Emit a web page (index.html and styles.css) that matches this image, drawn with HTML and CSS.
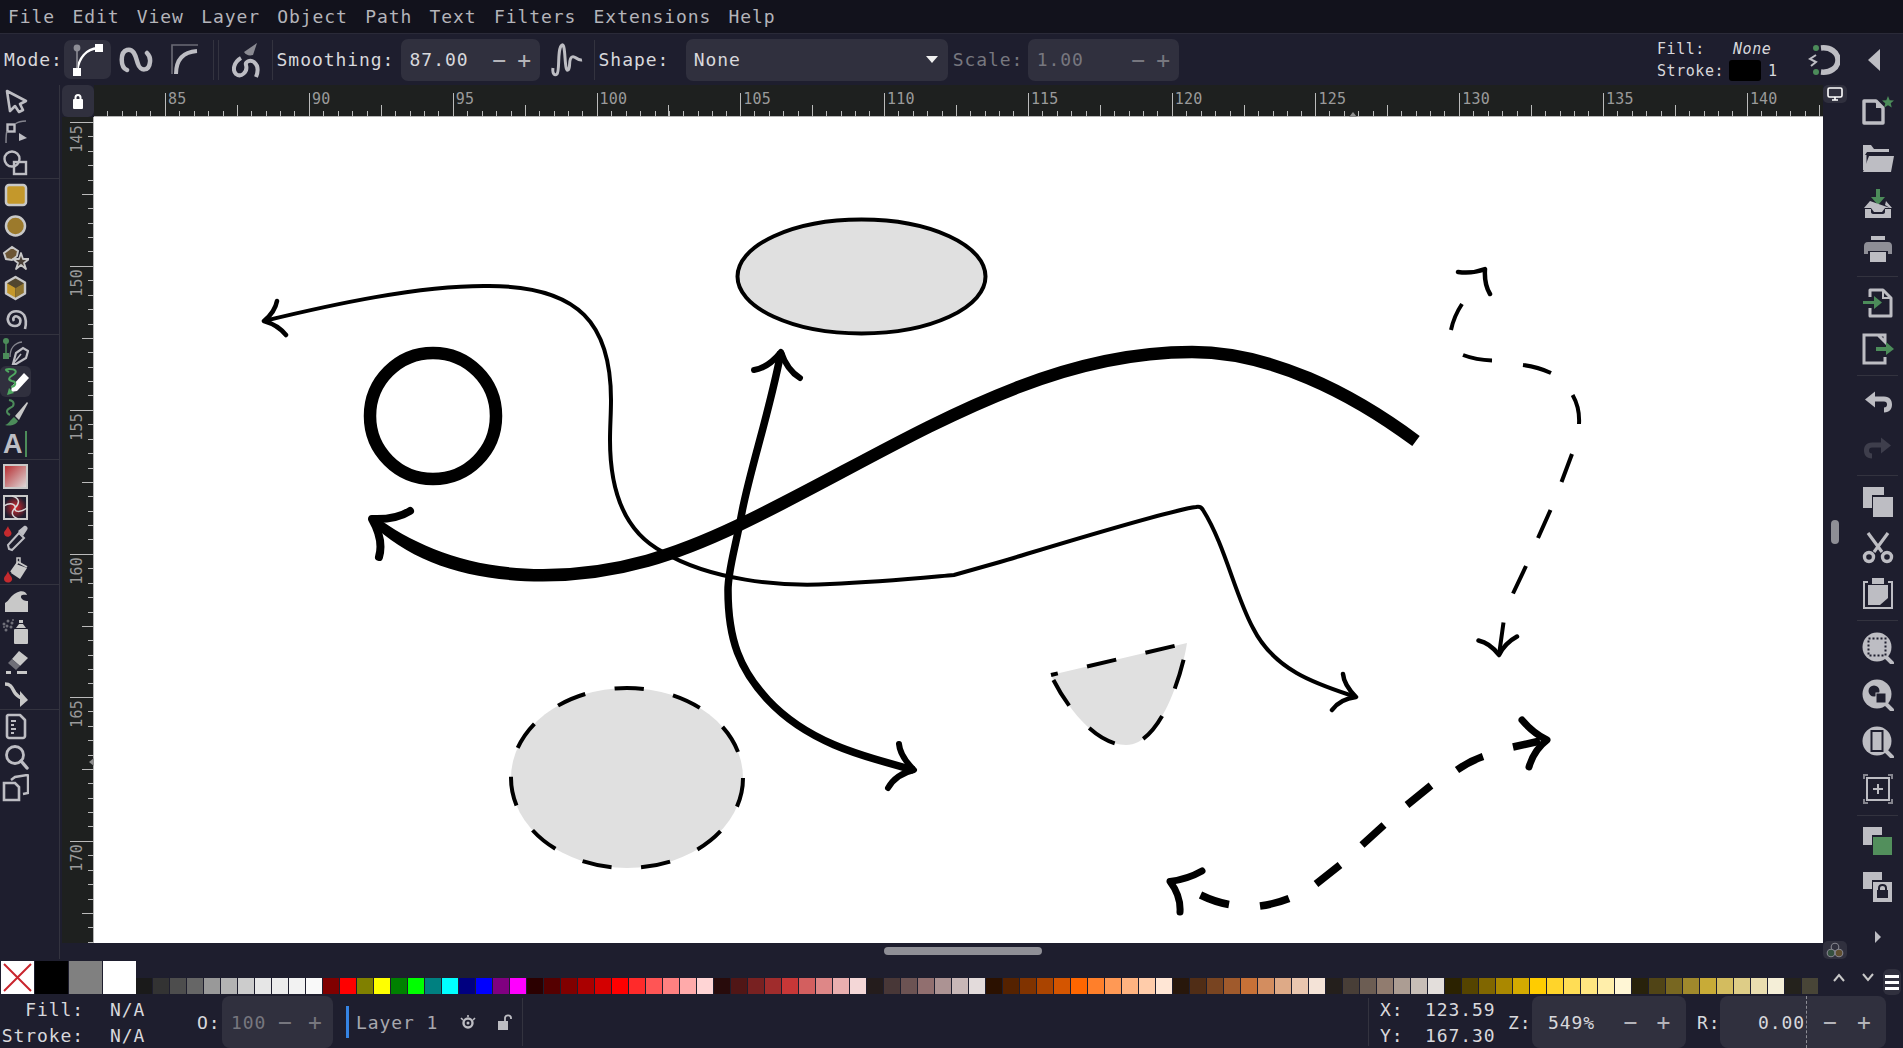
FILE: index.html
```html
<!DOCTYPE html>
<html>
<head>
	<title>Inkscape</title>
	<link rel="stylesheet" href="styles.css">
</head>

<body>
<div class="app">

	<!-- Menu -->
	<div class="menubar">
		<span>File</span><span>Edit</span><span>View</span><span>Layer</span><span>Object</span><span>Path</span><span>Text</span><span>Filters</span><span>Extensions</span><span>Help</span>
	</div>

	<!-- Pencil tool options -->
	<div class="toolbar">
		<span class="lbl mode-lbl">Mode:</span>
		<div class="modebtn active">
			<svg width="32" height="34" viewBox="0 0 32 34"><path d="M5 28C7 15 14 6 26 5" fill="none" stroke="#fff" stroke-width="2.4"/><path d="M5 6V26" stroke="#8e8e96" stroke-width="1.6"/><circle cx="5" cy="5" r="3.4" fill="#8e8e96"/><rect x="1" y="25" width="8" height="8" fill="#fff"/><rect x="23" y="1" width="8" height="8" fill="#fff"/></svg>
		</div>
		<div class="modebtn">
			<svg width="34" height="26" viewBox="0 0 34 26"><path d="M8 23C1 20 1 5 8 3C16 1 17 12 19 17C21 24 30 25 31 15C31.500 11 30 8 28 6" fill="none" stroke="#bdbdc3" stroke-width="4.500" stroke-linecap="round"/></svg>
		</div>
		<div class="modebtn">
			<svg width="28" height="32" viewBox="0 0 28 32"><path d="M1 30V1H27" fill="none" stroke="#6b6b75" stroke-width="1.600"/><path d="M5 30C5 16 12 8 26 7" fill="none" stroke="#bdbdc3" stroke-width="4"/></svg>
		</div>
		<i class="vsep s1"></i><i class="vsep s2"></i>
		<div class="inkbtn">
			<svg width="28" height="36" viewBox="0 0 28 36"><path d="M12 10L25 1L21 13C17 14 14 13 12 10Z" fill="#8a8a92"/><path d="M9 16C2 20 0 28 4 32C9 36 16 30 14 23C13 20 18 17 22 20C27 24 26 30 24 35" fill="none" stroke="#bdbdc3" stroke-width="4"/></svg>
		</div>
		<i class="vsep s3"></i>
		<span class="lbl smooth-lbl">Smoothing:</span>
		<div class="spin smooth"><span class="val">87.00</span><span class="pm">−</span><span class="pm">+</span></div>
		<div class="shapeicon">
			<svg width="32" height="36" viewBox="0 0 32 36"><path d="M2 26C1 32 4 34 6 32C9 29 6 6 11 3C15 1 13 30 17 28C20 26 17 17 21 15C24 13 26 19 31 18" fill="none" stroke="#bdbdc3" stroke-width="3"/></svg>
		</div>
		<i class="vsep s4"></i>
		<span class="lbl shape-lbl">Shape:</span>
		<div class="select"><span>None</span><i class="caret"></i></div>
		<span class="lbl dim scale-lbl">Scale:</span>
		<div class="spin scale dim"><span class="val">1.00</span><span class="pm">−</span><span class="pm">+</span></div>

		<div class="fillstroke">
			<div class="fs-row"><span class="fs-lbl">Fill:</span><em>None</em></div>
			<div class="fs-row"><span class="fs-lbl">Stroke:</span><b class="swatch-black"></b><span class="fs-w">1</span></div>
		</div>
		<div class="styleicon">
			<svg width="32" height="32" viewBox="0 0 32 32"><path d="M13 4C22 3 30 8 30 16C30 24 22 29 13 28" fill="none" stroke="#bdbdc3" stroke-width="5.500"/><circle cx="8" cy="4" r="3" fill="#4c8c5a"/><circle cx="8" cy="28" r="3" fill="#4c8c5a"/><path d="M8 11L2 15L8 18L3 22" fill="none" stroke="#bdbdc3" stroke-width="2"/></svg>
		</div>
		<i class="collapse"></i>
	</div>

	<div class="main">
		<!-- Tool column -->
		<div class="tools">
			<div class="tool"><svg width="28" height="28" viewBox="0 0 28 28"><path d="M6 4L25 14L19 17L22 23L18 25L14 19L9 24Z" fill="none" stroke="#bdbdc3" stroke-width="2.600" stroke-linejoin="round"/></svg></div>
			<div class="tool"><svg width="28" height="28" viewBox="0 0 28 28"><rect x="6.500" y="6.500" width="7" height="7" fill="none" stroke="#bdbdc3" stroke-width="2.400"/><path d="M5 25C5 19 5 15 6 13M14 6C17 4 20 3 25 3" fill="none" stroke="#85858e" stroke-width="1.500"/><path d="M18 15L26 20L18 23Z" fill="#bdbdc3"/></svg></div>
			<div class="tool"><svg width="28" height="28" viewBox="0 0 28 28"><circle cx="11" cy="10" r="7.500" fill="none" stroke="#bdbdc3" stroke-width="2.400"/><rect x="13" y="13" width="12" height="12" fill="none" stroke="#bdbdc3" stroke-width="2.400"/></svg></div>
			<i class="hsep"></i>
			<div class="tool"><svg width="28" height="28" viewBox="0 0 28 28"><rect x="5" y="4" width="20" height="20" rx="3" fill="#c4982b" stroke="#c8c8c8" stroke-width="2.500"/></svg></div>
			<div class="tool"><svg width="28" height="28" viewBox="0 0 28 28"><circle cx="14.500" cy="14" r="9.500" fill="#9c7a2c" stroke="#c8c8c8" stroke-width="2.500"/></svg></div>
			<div class="tool"><svg width="28" height="28" viewBox="0 0 28 28"><path d="M3 10L11 4L17 8L16 13L11 17L5 16Z" fill="#6b5535" stroke="#c8c8c8" stroke-width="2"/><path d="M20 10L22 16L28 16L23 20L25 26L20 22L15 26L17 20L12 16L18 16Z" fill="#4a4038" stroke="#c8c8c8" stroke-width="1.800" stroke-linejoin="round"/></svg></div>
			<div class="tool"><svg width="28" height="28" viewBox="0 0 28 28"><path d="M14.500 3L24 8.500L14.500 14L5 8.500Z" fill="#51462f"/><path d="M5 8.500L14.500 14V25L5 19.500Z" fill="#c4982b"/><path d="M24 8.500L14.500 14V25L24 19.500Z" fill="#8f7430"/><path d="M14.500 3L24 8.500V19.500L14.500 25L5 19.500V8.500Z" fill="none" stroke="#c8c8c8" stroke-width="2.400" stroke-linejoin="round"/></svg></div>
			<div class="tool"><svg width="28" height="28" viewBox="0 0 28 28"><path d="M13 16C11 13 14 10 17 12C21 14 20 21 14 21C8 21 5 15 8 10C11 5 19 5 23 10C26 15 25 20 24 24" fill="none" stroke="#bdbdc3" stroke-width="2.600"/></svg></div>
			<i class="hsep"></i>
			<div class="tool"><svg width="28" height="28" viewBox="0 0 28 28"><circle cx="5" cy="4" r="3" fill="#4c8c5a"/><path d="M5 6V18" stroke="#4c8c5a" stroke-width="1.500"/><rect x="2" y="16" width="6" height="6" fill="#4c8c5a"/><path d="M9 20C9 12 13 6 21 5" fill="none" stroke="#85858e" stroke-width="1.400"/><path d="M12 27L15 16L22 11L27 14L25 21L15 27Z" fill="none" stroke="#bdbdc3" stroke-width="2.200"/><path d="M12 27L20 17" stroke="#bdbdc3" stroke-width="1.500"/></svg></div>
			<div class="tool on"><svg width="28" height="28" viewBox="0 0 28 28"><path d="M10 18L22 5L27 10L15 23L9 24Z" fill="#fff"/><path d="M7 4C3 2 3 1 7 1C14 1 16 4 11 7C6 10 6 12 10 13C15 14 14 18 9 19" fill="none" stroke="#4fa860" stroke-width="2"/><path d="M7 20L12 25L5 27Z" fill="#4fa860"/></svg></div>
			<div class="tool"><svg width="28" height="28" viewBox="0 0 28 28"><path d="M8 1C14 2 14 7 9 9C5 11 5 14 9 16" fill="none" stroke="#4c8c5a" stroke-width="2"/><path d="M14 17L26 3L27 4L18 21Z" fill="#c8c8c8"/><path d="M13 18L17 22C14 27 8 27 4 26C8 25 9 21 13 18Z" fill="#4c8c5a"/></svg></div>
			<div class="tool text-tool"><span class="glyph-a">A</span><i class="caret-green"></i></div>
			<i class="hsep"></i>
			<div class="tool"><svg width="28" height="28" viewBox="0 0 28 28"><defs><linearGradient id="gr" x1="0" y1="0" x2="1" y2="1"><stop offset="0" stop-color="#b5262a"/><stop offset="1" stop-color="#e0e0e0"/></linearGradient></defs><rect x="3" y="3" width="23" height="23" fill="url(#gr)" stroke="#c8c8c8" stroke-width="2"/></svg></div>
			<div class="tool"><svg width="28" height="28" viewBox="0 0 28 28"><defs><radialGradient id="ms"><stop offset="0" stop-color="#e0282c"/><stop offset="1" stop-color="#1e1e2e"/></radialGradient></defs><rect x="3" y="3" width="23" height="23" fill="url(#ms)" stroke="#c8c8c8" stroke-width="2"/><path d="M3 13C9 9 15 11 14 15C13 19 19 20 26 15M11 3C19 5 19 10 14 15C10 19 10 23 17 26" fill="none" stroke="#d8d8d8" stroke-width="1.500"/></svg></div>
			<div class="tool"><svg width="28" height="28" viewBox="0 0 28 28"><path d="M7 2C8 6 12 8 10 11C8 14 3 13 3 9C3 7 6 5 7 2Z" fill="#c52a2e"/><path d="M8 25L7 21L18 9L23 14L11 26Z" fill="none" stroke="#bdbdc3" stroke-width="2"/><path d="M17 7L23 2C25 1 28 4 26 6L22 12Z" fill="#bdbdc3"/></svg></div>
			<div class="tool"><svg width="28" height="28" viewBox="0 0 28 28"><path d="M15 9L26 13L19 24L10 18Z" fill="#c8c8c8"/><path d="M10 17L17 7L26 12" fill="none" stroke="#c8c8c8" stroke-width="2"/><path d="M16 9V3H19V8" fill="none" stroke="#c8c8c8" stroke-width="1.500"/><path d="M7 16C8 20 12 22 11 25C9 29 3 28 3 24C3 21 6 20 7 16Z" fill="#c52a2e"/></svg></div>
			<i class="hsep"></i>
			<div class="tool"><svg width="28" height="28" viewBox="0 0 28 28"><path d="M4 25V16C8 14 10 8 15 6C20 3 25 4 26 8C22 7 18 8 21 12C23 14 26 14 27 14V25Z" fill="#c8c8c8"/></svg></div>
			<div class="tool"><svg width="28" height="28" viewBox="0 0 28 28"><rect x="13" y="11" width="14" height="15" rx="1" fill="#c8c8c8"/><path d="M15 10L18 6H22L25 10Z" fill="#c8c8c8"/><rect x="18" y="2" width="4" height="3" fill="#c8c8c8"/><g fill="#6f6f78"><circle cx="3" cy="6" r="1.500"/><circle cx="7" cy="3" r="1.500"/><circle cx="11" cy="5" r="1.500"/><circle cx="6" cy="8" r="1.500"/><circle cx="10" cy="9" r="1.500"/><circle cx="5" cy="12" r="1.500"/><circle cx="3" cy="9" r="1"/><circle cx="12" cy="2" r="1"/></g></svg></div>
			<div class="tool"><svg width="28" height="28" viewBox="0 0 28 28"><path d="M18 2L27 9L19 17L11 10Z" fill="#c8c8c8"/><path d="M11 10L19 17L15 21L7 14Z" fill="#6f6f78"/><rect x="16" y="22" width="10" height="3" fill="#c8c8c8"/><rect x="5" y="22" width="5" height="3" fill="#c8c8c8"/></svg></div>
			<div class="tool"><svg width="28" height="28" viewBox="0 0 28 28"><path d="M4 4C10 4 11 8 14 13C16 16 18 17 21 18" fill="none" stroke="#c8c8c8" stroke-width="3.400"/><path d="M19 11L27 20L19 27Z" fill="#c8c8c8"/></svg></div>
			<i class="hsep"></i>
			<div class="tool"><svg width="28" height="28" viewBox="0 0 28 28"><path d="M7 3H19L24 8V24C24 25 23 26 22 26H8C7 26 6 25 6 24V4Z" fill="none" stroke="#bdbdc3" stroke-width="2.600" stroke-linejoin="round"/><path d="M10 9H15M10 13H13M10 17H15M10 21H13" stroke="#bdbdc3" stroke-width="1.800"/></svg></div>
			<div class="tool"><svg width="28" height="28" viewBox="0 0 28 28"><circle cx="14" cy="12" r="8.500" fill="none" stroke="#bdbdc3" stroke-width="2.800"/><path d="M20 18L26 25" stroke="#bdbdc3" stroke-width="3.400" stroke-linecap="round"/></svg></div>
			<div class="tool"><svg width="28" height="28" viewBox="0 0 28 28"><path d="M3 9H14L18 13V26H3Z" fill="none" stroke="#bdbdc3" stroke-width="2.600"/><path d="M10 6L14 3L26 1C27 1 27 2 27 2V19L22 20" fill="none" stroke="#bdbdc3" stroke-width="2.400"/></svg></div>
		</div>

		<!-- Rulers and canvas -->
		<div class="workspace">
			<div class="ruler-row">
				<div class="corner">
					<svg width="12" height="16" viewBox="0 0 12 16"><rect x="1" y="6" width="10" height="10" rx="1" fill="#fff"/><path d="M3.500 7V4.500C3.500 1 8.500 1 8.500 4.500V7" fill="none" stroke="#fff" stroke-width="2"/></svg>
				</div>
				<div class="hruler">
					<div class="cell first"></div>
					<div class="cell">85</div><div class="cell">90</div><div class="cell">95</div><div class="cell">100</div><div class="cell">105</div><div class="cell">110</div><div class="cell">115</div><div class="cell">120</div><div class="cell">125</div><div class="cell">130</div><div class="cell">135</div><div class="cell">140</div>
					<i class="marker-h"></i>
				</div>
			</div>
			<div class="canvas-row">
				<div class="vruler">
					<div class="vcell first"><span>145</span></div>
					<div class="vcell"><span>150</span></div>
					<div class="vcell"><span>155</span></div>
					<div class="vcell"><span>160</span></div>
					<div class="vcell"><span>165</span></div>
					<div class="vcell"><span>170</span></div>
					<i class="marker-v"></i>
				</div>
				<div class="canvas">
					<svg class="drawing" width="1729" height="826" viewBox="94 117 1729 826">
						<!-- top ellipse -->
						<ellipse cx="861.500" cy="276.500" rx="124" ry="57" fill="#e0e0e0" stroke="#000" stroke-width="4"/>
						<!-- ring -->
						<circle cx="433" cy="416" r="63" fill="none" stroke="#000" stroke-width="12.500"/>
						<!-- dashed ellipse -->
						<ellipse cx="627" cy="778" rx="116" ry="90" fill="#e0e0e0" stroke="#000" stroke-width="4" stroke-dasharray="29.500 29.770"/>
						<!-- dashed wedge -->
						<path d="M1051 675L1187 643C1182 675 1160 745 1126 745C1095 745 1065 705 1051 675Z" fill="#e0e0e0" stroke="#000" stroke-width="4" stroke-dasharray="30 30" stroke-dashoffset="-37"/>

						<!-- thin long arrow -->
						<path d="M264 321C330 305 420 285 489 286C580 286 611 325 611 400C611 415 610 425 610 440C610 500 630 535 663 552C710 580 780 587 830 584C880 582 920 578 954 575L1000 562C1060 544 1170 510 1196 507Q1201 506 1203 510C1225 545 1235 595 1253 628C1275 672 1320 685 1356 697" fill="none" stroke="#000" stroke-width="4"/>
						<path d="M277 301Q275 312 264 321Q278 325 286 335M1343 674Q1344 685 1356 697Q1340 699 1332 710" fill="none" stroke="#000" stroke-width="4.500" stroke-linecap="round" stroke-linejoin="round"/>

						<!-- heavy sweep, thinning towards the head -->
						<path d="M375 516C415 546 470 569 543 569L543 581.500C470 581.500 410 562 371 523Z" fill="#000"/>
						<path d="M543 575.200C620 575 680 553 737 526C830 482 920 425 1016 388C1080 363 1140 352 1192 352C1270 352 1350 392 1416 441" fill="none" stroke="#000" stroke-width="12.500"/>
						<path d="M410 511Q396 520 372 519Q384 540 379 557" fill="none" stroke="#000" stroke-width="8" stroke-linecap="round" stroke-linejoin="round"/>

						<!-- medium double arrow -->
						<path d="M781 352C770 410 750 470 742 512C735 550 728 570 728 590C728 640 740 670 768 700C810 745 870 758 914 770" fill="none" stroke="#000" stroke-width="7.500"/>
						<path d="M754 370Q768 368 781 352Q787 370 800 378M899 744Q900 756 914 770Q896 774 888 788" fill="none" stroke="#000" stroke-width="6" stroke-linecap="round" stroke-linejoin="round"/>

						<!-- thin dashed arrow -->
						<path d="M1462 304Q1454 316 1451 330M1463 355Q1476 360 1492 360.500M1523 365Q1538 367 1551 373M1572.600 395Q1580 408 1579 424M1572 454L1561.500 482M1550.500 510L1538 538M1526 566L1513 593.500M1503.500 622.500L1499 655" fill="none" stroke="#000" stroke-width="4"/>
						<path d="M1458 272Q1472 274 1485 269Q1484 284 1490 294M1478.500 640.500Q1490 643 1499 655Q1505 643 1517 636.500" fill="none" stroke="#000" stroke-width="4.500" stroke-linecap="round" stroke-linejoin="round"/>

						<!-- thick dashed arrow -->
						<path d="M1513 747L1540 741M1483 756.500Q1470 761 1457 770M1431 785.500L1407 805M1384 825L1362 845M1340 865L1316 884M1289 898.500Q1275 904 1260 906M1229 904.500Q1215 902 1200.500 895" fill="none" stroke="#000" stroke-width="7.500"/>
						<path d="M1522 720Q1533 733 1547 740Q1534 750 1529 767M1202 871Q1188 879 1170 881.500Q1181 896 1180 912" fill="none" stroke="#000" stroke-width="7" stroke-linecap="round" stroke-linejoin="round"/>
					</svg>
				</div>
			</div>
			<div class="hscroll"><i class="hthumb"></i></div>
		</div>

		<!-- Right command bar -->
		<div class="side">
			<div class="side-narrow">
				<div class="mini-btn"><svg width="16" height="14" viewBox="0 0 16 14"><rect x="1" y="1" width="14" height="9" rx="1.500" fill="none" stroke="#fff" stroke-width="1.600"/><path d="M5 13H11M8 10V13" stroke="#fff" stroke-width="1.600"/></svg></div>
				<i class="vthumb"></i>
				<div class="mini-btn"><svg width="18" height="16" viewBox="0 0 18 16"><circle cx="9" cy="5" r="3.800" fill="none" stroke="#85858e" stroke-width="1.100"/><circle cx="5" cy="11" r="3.800" fill="#35503f" stroke="#85858e" stroke-width="1.100"/><circle cx="13" cy="11" r="3.800" fill="#5f4e30" stroke="#85858e" stroke-width="1.100"/></svg></div>
			</div>
			<div class="side-tools">
				<div class="cmd"><svg width="32" height="32" viewBox="0 0 32 32"><path d="M2 5H14L21 12V27H2Z" fill="none" stroke="#bdbdc3" stroke-width="3.400" stroke-linejoin="round"/><path d="M14 5L21 12H14Z" fill="#bdbdc3"/><path d="M26 0L27.700 4.200L32 4.500L28.700 7.300L29.800 11.500L26 9.200L22.200 11.500L23.300 7.300L20 4.500L24.300 4.200Z" fill="#4c8c5a"/></svg></div>
				<div class="cmd"><svg width="32" height="32" viewBox="0 0 32 32"><path d="M1 3H9L12 7H27V10H5L3 13V28H1Z" fill="#bdbdc3"/><path d="M7 14H32L29 30H1Z" fill="#bdbdc3"/><path d="M3 13V28" stroke="#bdbdc3" stroke-width="3"/></svg></div>
				<div class="cmd"><svg width="32" height="32" viewBox="0 0 32 32"><path d="M16 1V10" stroke="#4c8c5a" stroke-width="4"/><path d="M9 9H23L16 17Z" fill="#4c8c5a"/><path d="M8 13L2 20H9L12 24H20L23 20H30L24 13L23 17L28 20M3 21H9V24C9 25 10 26 11 26H21C22 26 23 25 23 24V21H29V30H3Z" fill="#bdbdc3"/></svg></div>
				<div class="cmd"><svg width="32" height="32" viewBox="0 0 32 32"><rect x="9" y="3" width="14" height="4" fill="#bdbdc3"/><path d="M6 9H26C29 9 30 11 30 13V21H26V18H6V21H2V13C2 11 3 9 6 9Z" fill="#8e8e96"/><rect x="8" y="19" width="16" height="10" fill="#bdbdc3"/></svg></div>
				<i class="cmd-sep"></i>
				<div class="cmd"><svg width="32" height="32" viewBox="0 0 32 32"><path d="M8 10V3H21L29 11V29H8V21" fill="none" stroke="#bdbdc3" stroke-width="3" stroke-linejoin="round"/><path d="M21 3V11H29" fill="none" stroke="#bdbdc3" stroke-width="2"/><path d="M1 14H12V9L20 15.500L12 22V17H1Z" fill="#4c8c5a"/></svg></div>
				<div class="cmd"><svg width="32" height="32" viewBox="0 0 32 32"><path d="M23 9V2H16L23 9ZM16 2H2V30H23V24" fill="none" stroke="#bdbdc3" stroke-width="3"/><path d="M14 14H24V9L32 16L24 22V18H14Z" fill="#4c8c5a"/></svg></div>
				<i class="cmd-sep"></i>
				<div class="cmd"><svg width="32" height="32" viewBox="0 0 32 32"><path transform="translate(0 2.500)" d="M3 11L13 3V8H22C28 8 30 12 30 16C30 20 28 24 22 24V19C24 19 25 18 25 16C25 14 24 13 22 13H13V19Z" fill="#bdbdc3"/></svg></div>
				<div class="cmd"><svg width="32" height="32" viewBox="0 0 32 32"><path transform="translate(0 2.500)" d="M29 11L19 3V8H10C4 8 2 12 2 16C2 20 4 24 10 24V19C8 19 7 18 7 16C7 14 8 13 10 13H19V19Z" fill="#3e3e4c"/></svg></div>
				<i class="cmd-sep"></i>
				<div class="cmd"><svg width="32" height="32" viewBox="0 0 32 32"><path d="M1 1H22V9H10V22H1Z" fill="#bdbdc3"/><rect x="11" y="11" width="20" height="20" fill="#bdbdc3"/></svg></div>
				<div class="cmd"><svg width="32" height="32" viewBox="0 0 32 32"><path d="M26 1L12 20M6 1L20 20" stroke="#bdbdc3" stroke-width="3.200"/><circle cx="7" cy="25" r="4.500" fill="none" stroke="#bdbdc3" stroke-width="3.400"/><circle cx="25" cy="25" r="4.500" fill="none" stroke="#bdbdc3" stroke-width="3.400"/></svg></div>
				<div class="cmd"><svg width="32" height="32" viewBox="0 0 32 32"><path d="M6 5H2V31H30V5H26" fill="none" stroke="#bdbdc3" stroke-width="2"/><rect x="10" y="1" width="12" height="6" fill="#bdbdc3"/><path d="M6 8H26V21L18 28H6Z" fill="#bdbdc3"/></svg></div>
				<i class="cmd-sep"></i>
				<div class="zoom-group">
					<div class="cmd"><svg width="32" height="32" viewBox="0 0 32 32"><circle cx="15" cy="15" r="14.500" fill="#bdbdc3"/><path d="M24 25L30 31" stroke="#bdbdc3" stroke-width="4" stroke-linecap="round"/><rect x="6.500" y="6.500" width="17" height="17" fill="none" stroke="#1e1e2e" stroke-width="2" stroke-dasharray="2 2"/></svg></div>
					<div class="cmd"><svg width="32" height="32" viewBox="0 0 32 32"><circle cx="15" cy="15" r="14.500" fill="#bdbdc3"/><path d="M24 25L30 31" stroke="#bdbdc3" stroke-width="4" stroke-linecap="round"/><circle cx="12" cy="12" r="5.500" fill="#1e1e2e"/><rect x="14" y="14" width="10" height="10" fill="#1e1e2e" stroke="#bdbdc3" stroke-width="1"/></svg></div>
					<div class="cmd"><svg width="32" height="32" viewBox="0 0 32 32"><circle cx="15" cy="15" r="14.500" fill="#bdbdc3"/><path d="M24 25L30 31" stroke="#bdbdc3" stroke-width="4" stroke-linecap="round"/><rect x="9.500" y="5" width="11" height="20" fill="none" stroke="#1e1e2e" stroke-width="2"/></svg></div>
					<div class="cmd"><svg width="32" height="32" viewBox="0 0 32 32"><path d="M2 6V2H6M26 2H30V6M30 26V30H26M6 30H2V26" fill="none" stroke="#85858e" stroke-width="2"/><rect x="5" y="5" width="22" height="22" fill="none" stroke="#bdbdc3" stroke-width="2"/><path d="M16 11V21M11 16H21" stroke="#bdbdc3" stroke-width="2"/></svg></div>
				</div>
				<i class="cmd-sep last"></i>
				<div class="cmd"><svg width="32" height="32" viewBox="0 0 32 32"><path d="M1 2H20V10H10V20H1Z" fill="#bdbdc3"/><rect x="11" y="12" width="19" height="18" fill="#528f5c"/></svg></div>
				<div class="cmd"><svg width="32" height="32" viewBox="0 0 32 32"><path d="M1 1H20V9H10V18H1Z" fill="#bdbdc3"/><rect x="11" y="11" width="19" height="20" fill="#bdbdc3"/><rect x="15" y="19" width="11" height="8" fill="#1e1e2e"/><path d="M17 19V17C17 13 24 13 24 17V19" fill="none" stroke="#1e1e2e" stroke-width="2"/></svg></div>
				<i class="more"></i>
			</div>
		</div>
	</div>

	<!-- Palette -->
	<div class="palette">
		<span class="big none"><svg width="33" height="33" viewBox="0 0 33 33"><path d="M3 3L30 30M30 3L3 30" stroke="#c9252d" stroke-width="2"/></svg></span>
		<span class="big" style="background:#000"></span><span class="big" style="background:#808080"></span><span class="big big-last" style="background:#fff"></span>
		<div class="swatches">
			<span style="background:#1a1a1a"></span><span style="background:#333"></span><span style="background:#4d4d4d"></span><span style="background:#666"></span><span style="background:#999"></span><span style="background:#b3b3b3"></span><span style="background:#ccc"></span><span style="background:#e6e6e6"></span><span style="background:#ececec"></span><span style="background:#f2f2f2"></span><span style="background:#f9f9f9"></span>
			<span style="background:#800000"></span><span style="background:#f00"></span><span style="background:#808000"></span><span style="background:#ff0"></span><span style="background:#008000"></span><span style="background:#0f0"></span><span style="background:#008080"></span><span style="background:#0ff"></span><span style="background:#000080"></span><span style="background:#00f"></span><span style="background:#800080"></span><span style="background:#f0f"></span>
			<span style="background:#2b0000"></span><span style="background:#500"></span><span style="background:#800000"></span><span style="background:#a00"></span><span style="background:#d40000"></span><span style="background:#f00"></span><span style="background:#ff2a2a"></span><span style="background:#f55"></span><span style="background:#ff8080"></span><span style="background:#faa"></span><span style="background:#ffd5d5"></span>
			<span style="background:#280b0b"></span><span style="background:#501616"></span><span style="background:#782121"></span><span style="background:#a02c2c"></span><span style="background:#c83737"></span><span style="background:#d35f5f"></span><span style="background:#de8787"></span><span style="background:#e9afaf"></span><span style="background:#f4d7d7"></span>
			<span style="background:#241c1c"></span><span style="background:#483737"></span><span style="background:#6c5353"></span><span style="background:#916f6f"></span><span style="background:#ac9393"></span><span style="background:#c8b7b7"></span><span style="background:#e3dbdb"></span>
			<span style="background:#2b1100"></span><span style="background:#520"></span><span style="background:#803300"></span><span style="background:#a40"></span><span style="background:#d45500"></span><span style="background:#f60"></span><span style="background:#ff7f2a"></span><span style="background:#f95"></span><span style="background:#ffb380"></span><span style="background:#fca"></span><span style="background:#ffe6d5"></span>
			<span style="background:#28170b"></span><span style="background:#502d16"></span><span style="background:#784421"></span><span style="background:#a05a2c"></span><span style="background:#c87137"></span><span style="background:#d38d5f"></span><span style="background:#deaa87"></span><span style="background:#e9c6af"></span><span style="background:#f4e3d7"></span>
			<span style="background:#241f1c"></span><span style="background:#483e37"></span><span style="background:#6c5d53"></span><span style="background:#917c6f"></span><span style="background:#ac9d93"></span><span style="background:#c8beb7"></span><span style="background:#e3dedb"></span>
			<span style="background:#2b2200"></span><span style="background:#540"></span><span style="background:#806600"></span><span style="background:#a80"></span><span style="background:#d4aa00"></span><span style="background:#fc0"></span><span style="background:#ffd42a"></span><span style="background:#fd5"></span><span style="background:#ffe680"></span><span style="background:#fea"></span><span style="background:#fff6d5"></span>
			<span style="background:#28220b"></span><span style="background:#504416"></span><span style="background:#786721"></span><span style="background:#a0892c"></span><span style="background:#c8ab37"></span><span style="background:#d3bc5f"></span><span style="background:#decd87"></span><span style="background:#e9ddaf"></span><span style="background:#f4eed7"></span>
			<span style="background:#24221c"></span><span style="background:#484537"></span>
		</div>
		<div class="pal-btns">
			<svg width="12" height="9" viewBox="0 0 12 9"><path d="M1 8L6 2L11 8" fill="none" stroke="#c8c8c8" stroke-width="2"/></svg>
			<svg width="12" height="9" viewBox="0 0 12 9"><path d="M1 1L6 7L11 1" fill="none" stroke="#c8c8c8" stroke-width="2"/></svg>
			<div class="burger"><i></i><i></i><i></i></div>
		</div>
	</div>

	<!-- Status -->
	<div class="status">
		<div class="sel-style">
			<div class="st-row"><span class="st-lbl">Fill:</span><span>N/A</span></div>
			<div class="st-row"><span class="st-lbl">Stroke:</span><span>N/A</span></div>
		</div>
		<span class="lbl o-lbl">O:</span>
		<div class="spin full opacity dim"><span class="val">100</span><span class="pm">−</span><span class="pm">+</span></div>
		<i class="layer-bar"></i>
		<span class="layer-name">Layer 1</span>
		<svg class="eye" width="16" height="14" viewBox="0 0 16 14"><circle cx="8" cy="8" r="4.500" fill="none" stroke="#bdbdc3" stroke-width="2.400"/><circle cx="8" cy="8" r="1.500" fill="#bdbdc3"/><path d="M1 3L3 5M15 3L13 5M8 0V2" stroke="#bdbdc3" stroke-width="1.600"/></svg>
		<svg class="padlock" width="14" height="16" viewBox="0 0 14 16"><rect x="0" y="7" width="10" height="9" fill="#bdbdc3"/><path d="M7 7V4C7 0.500 13 0.500 13 4V5" fill="none" stroke="#bdbdc3" stroke-width="1.800"/></svg>
		<i class="st-sep first"></i>
		<i class="st-sep second"></i>
		<div class="coords">
			<div class="st-row"><span class="c-lbl">X:</span><span class="c-val">123.59</span></div>
			<div class="st-row"><span class="c-lbl">Y:</span><span class="c-val">167.30</span></div>
		</div>
		<span class="lbl z-lbl">Z:</span>
		<div class="spin full zoomspin"><span class="val">549%</span><span class="pm">−</span><span class="pm">+</span></div>
		<span class="lbl r-lbl">R:</span>
		<div class="spin full rot"><span class="val">0.00</span><span class="pm">−</span><span class="pm">+</span></div>
	</div>
</div>
</body>

</html>
```

FILE: styles.css
```css
html,
body {
	margin: 0;
	height: 100%;
	overflow: hidden;
	background: #1e1e2e;
}

.app {
	width: 1903px;
	height: 1048px;
	display: flex;
	flex-direction: column;
	font-family: "DejaVu Sans Mono", "Liberation Mono", monospace;
	font-size: 18px;
	letter-spacing: 0.93px;
	color: #d8d8dc;
}

i {
	display: block;
	flex: none;
}

svg {
	display: block;
	flex: none;
}

/* menu */
.menubar {
	height: 33px;
	flex: none;
	display: flex;
	align-items: center;
	gap: 17.3px;
	padding-left: 8px;
	background: #12121c;
	border-bottom: 1px solid #2a2a38;
	color: #b4b4ba;
}

/* tool options */
.toolbar {
	height: 51px;
	flex: none;
	display: flex;
	align-items: center;
	padding-left: 4px;
	position: relative;
}

.lbl {
	flex: none;
	white-space: nowrap;
}

.dim {
	color: #77777f;
}

.mode-lbl {
	width: 60px;
}

.modebtn {
	width: 48px;
	height: 39px;
	display: flex;
	align-items: center;
	justify-content: center;
	border-radius: 7px;
	flex: none;
}

.modebtn.active {
	background: #30303e;
	width: 47px;
}

.modebtn + .modebtn {
	width: 49px;
}

.vsep {
	width: 1px;
	height: 40px;
	background: #33333f;
}

.s1 {
	margin-left: 4px;
}

.s2 {
	margin-left: 4px;
}

.inkbtn {
	width: 53px;
	display: flex;
	justify-content: center;
	flex: none;
}

.smooth-lbl {
	margin-left: 3.6px;
	width: 124px;
}

.spin {
	display: flex;
	align-items: center;
	flex: none;
	height: 42px;
	background: #30303e;
	border-radius: 7px;
	padding-left: 9px;
	box-sizing: border-box;
}

.spin .val {
	flex: 1;
}

.spin .pm {
	width: 25px;
	text-align: center;
	font-size: 23px;
	letter-spacing: 0;
	color: #b4b4ba;
}

.spin.dim .pm {
	color: #77777f;
}

.smooth {
	width: 139px;
	padding-right: 3px;
}

.shapeicon {
	width: 54px;
	display: flex;
	justify-content: center;
	flex: none;
}

.shape-lbl {
	margin-left: 2px;
	width: 89.2px;
	padding-left: 2px;
	box-sizing: border-box;
}

.select {
	width: 262px;
	height: 42px;
	flex: none;
	display: flex;
	align-items: center;
	justify-content: space-between;
	padding: 0 10px 0 8px;
	box-sizing: border-box;
	background: #30303e;
	border-radius: 7px;
}

.caret {
	width: 0;
	height: 0;
	border-left: 6px solid transparent;
	border-right: 6px solid transparent;
	border-top: 7px solid #f0f0f0;
}

.scale-lbl {
	margin-left: 5px;
	width: 75px;
}

.scale {
	width: 151px;
	padding-right: 3px;
}

.fillstroke {
	margin-left: auto;
	width: 151px;
	font-size: 15px;
	letter-spacing: 0.55px;
	flex: none;
}

.fs-row {
	height: 22px;
	display: flex;
	align-items: center;
}

.fs-lbl {
	width: 72px;
	flex: none;
}

.fs-row em {
	margin-left: 4px;
}

.swatch-black {
	width: 32px;
	height: 21px;
	background: #000;
	border-radius: 3px;
	flex: none;
}

.fs-w {
	margin-left: 7px;
}

.styleicon {
	flex: none;
	margin-right: 28px;
}

.collapse {
	width: 0;
	height: 0;
	border-top: 11px solid transparent;
	border-bottom: 11px solid transparent;
	border-right: 12px solid #bdbdc3;
	margin-right: 23px;
}

/* main area */
.main {
	height: 876px;
	flex: none;
	display: flex;
}

.tools {
	width: 59px;
	flex: none;
	border-right: 1px solid #33333f;
	margin-right: 2px;
	height: 874px;
}

.tool {
	height: 31px;
	width: 30px;
	display: flex;
	align-items: center;
	justify-content: center;
}

.tool.on {
	width: 31px;
	background: #30303e;
	border-radius: 6px;
}

.hsep {
	height: 1px;
	background: #33333f;
}

.text-tool {
	justify-content: flex-start;
	align-items: center;
	padding-left: 3px;
	box-sizing: border-box;
	gap: 2px;
}

.glyph-a {
	font-family: "Liberation Sans", sans-serif;
	font-weight: 700;
	font-size: 27px;
	letter-spacing: 0;
	color: #bdbdc3;
	line-height: 28px;
}

.caret-green {
	width: 2.5px;
	height: 26px;
	background: #4c8c5a;
}

/* rulers */
.workspace {
	width: 1761px;
	flex: none;
	display: flex;
	flex-direction: column;
}

.ruler-row {
	height: 32px;
	flex: none;
	display: flex;
}

.corner {
	width: 32px;
	flex: none;
	background: #30303e;
	border-radius: 6px;
	display: flex;
	align-items: center;
	justify-content: center;
}

.hruler {
	flex: 1;
	display: flex;
	overflow: hidden;
	position: relative;
	background: #1e201f;
	box-shadow: inset 0 -1px 0 #b4b4b4;
}

.cell {
	width: 143.8px;
	flex: none;
	box-sizing: border-box;
	padding: 6px 0 0 3px;
	font-size: 15px;
	letter-spacing: 0.2px;
	line-height: 16px;
	color: #9a9a9a;
	background-image:
		linear-gradient(#bbb, #bbb),
		linear-gradient(#bbb, #bbb),
		repeating-linear-gradient(90deg, #bbb 0 1px, transparent 1px 14.38px);
	background-size: 1px 24px, 1px 12px, 100% 6px;
	background-position: 0 100%, 71.9px 100%, 0 100%;
	background-repeat: no-repeat;
}

.cell.first {
	margin-left: -72.700px;
}

.marker-h {
	position: absolute;
	left: 1255px;
	bottom: 0;
	width: 0;
	height: 0;
	border-left: 4px solid transparent;
	border-right: 4px solid transparent;
	border-bottom: 5px solid #8e8e8e;
}

.canvas-row {
	height: 826px;
	flex: none;
	display: flex;
}

.vruler {
	width: 32px;
	flex: none;
	box-sizing: border-box;
	overflow: hidden;
	position: relative;
	background: #1e201f;
	box-shadow: inset -1px 0 0 #b4b4b4;
	font-size: 15px;
	letter-spacing: 0.2px;
	color: #9a9a9a;
}

.vcell {
	height: 143.8px;
	box-sizing: border-box;
	padding: 3px 0 0 7px;
	background-image:
		linear-gradient(#bbb, #bbb),
		linear-gradient(#bbb, #bbb),
		repeating-linear-gradient(180deg, #bbb 0 1px, transparent 1px 14.38px);
	background-size: 24px 1px, 12px 1px, 6px 100%;
	background-position: 100% 0, 100% 71.9px, 100% 0;
	background-repeat: no-repeat;
}

.vcell.first {
	margin-top: 5.3px;
}

.vcell span {
	display: block;
	writing-mode: vertical-rl;
	transform: rotate(180deg);
	line-height: 16px;
	width: 16px;
}

.marker-v {
	position: absolute;
	right: 0;
	top: 641px;
	width: 0;
	height: 0;
	border-top: 4px solid transparent;
	border-bottom: 4px solid transparent;
	border-right: 5px solid #8e8e8e;
}

.canvas {
	flex: 1;
	background: #fff;
	overflow: hidden;
}

.drawing {
	display: block;
}

.hscroll {
	height: 18px;
	flex: none;
	padding: 4px 0 0 822px;
	box-sizing: border-box;
}

.hthumb {
	width: 158px;
	height: 8px;
	border-radius: 4px;
	background: #8f8f96;
}

/* right bar */
.side {
	width: 80px;
	flex: none;
	display: flex;
}

.side-narrow {
	width: 24px;
	height: 874px;
	flex: none;
	display: flex;
	flex-direction: column;
	align-items: center;
	justify-content: space-between;
}

.mini-btn {
	width: 24px;
	height: 20px;
	background: #30303e;
	border-radius: 5px;
	display: flex;
	align-items: center;
	justify-content: center;
}

.vthumb {
	width: 8px;
	height: 24px;
	border-radius: 4px;
	background: #8f8f96;
	margin-top: 417px;
	margin-bottom: 397px;
}

.side-tools {
	width: 50px;
	margin-left: 6px;
	flex: none;
	padding-top: 4.5px;
}

.cmd {
	height: 45.7px;
	display: flex;
	align-items: center;
	justify-content: center;
}

.zoom-group .cmd {
	height: 47px;
}

.cmd-sep {
	height: 1px;
	width: 41px;
	margin: 3.5px 0 3.5px 4px;
	background: #33333f;
}

.cmd-sep.last {
	margin-top: 2.5px;
	margin-bottom: 2.5px;
}

.more {
	width: 0;
	height: 0;
	border-top: 6px solid transparent;
	border-bottom: 6px solid transparent;
	border-left: 6px solid #bdbdc3;
	margin: 22px 0 0 22px;
}

/* palette */
.palette {
	height: 35px;
	flex: none;
	display: flex;
	align-items: flex-start;
	padding-left: 1px;
}

.big {
	width: 33px;
	height: 33px;
	margin-right: 1px;
	flex: none;
	display: block;
}

.big.none {
	background: #fff;
}

.big-last {
	margin-right: 0;
}

.swatches {
	display: flex;
	gap: 1px;
	margin-top: 17px;
	width: 1683px;
	flex: none;
}

.swatches span {
	width: 16px;
	height: 16px;
	flex: none;
}

.pal-btns {
	display: flex;
	align-items: flex-start;
	margin-left: 14px;
	gap: 17px;
	padding-top: 12px;
	position: relative;
}

.burger {
	width: 18px;
	height: 26px;
	margin: -4px 0 0 -8px;
	background: #30303e;
	border-radius: 6px;
	display: flex;
	flex-direction: column;
	justify-content: center;
	align-items: center;
	gap: 3px;
}

.burger i {
	width: 14px;
	height: 3px;
	background: #fff;
}

/* status bar */
.status {
	height: 52px;
	flex: none;
	display: flex;
	align-items: center;
	position: relative;
}

.sel-style {
	width: 197px;
	flex: none;
	padding-top: 1px;
}

.st-row {
	height: 26px;
	display: flex;
	align-items: center;
}

.st-lbl {
	width: 84px;
	text-align: right;
	margin-right: 26px;
	flex: none;
}

.o-lbl {
	width: 25px;
}

.spin.full {
	height: 52px;
	border-radius: 8px;
}

.opacity {
	width: 111px;
	padding-right: 3px;
}

.opacity .pm {
	width: 30px;
}

.layer-bar {
	width: 3px;
	height: 32px;
	background: #3584e4;
	margin-left: 13px;
}

.layer-name {
	margin-left: 7px;
	width: 104px;
	flex: none;
	color: #a8a8ae;
}

.eye {
	margin-right: 22px;
}

.st-sep {
	width: 1px;
	height: 48px;
	background: #33333f;
}

.st-sep.first {
	margin-left: 10px;
}

.st-sep.second {
	margin-left: 845px;
}

.coords {
	margin-left: 11px;
	width: 128px;
	flex: none;
	padding-top: 1px;
}

.c-lbl {
	width: 45px;
	flex: none;
}

.z-lbl {
	width: 24px;
}

.zoomspin {
	width: 154px;
	padding: 0 6px 0 16px;
}

.zoomspin .pm {
	width: 33px;
}

.r-lbl {
	width: 23px;
	margin-left: 11px;
}

.rot {
	width: 166px;
	padding: 0 5px 0 0;
	position: relative;
}

.rot .pm {
	width: 34px;
}

.rot .val {
	text-align: right;
	padding-right: 8px;
}

.rot::after {
	content: "";
	position: absolute;
	left: 86px;
	top: 0;
	bottom: 0;
	border-left: 1px dashed #8e8e96;
}
```
